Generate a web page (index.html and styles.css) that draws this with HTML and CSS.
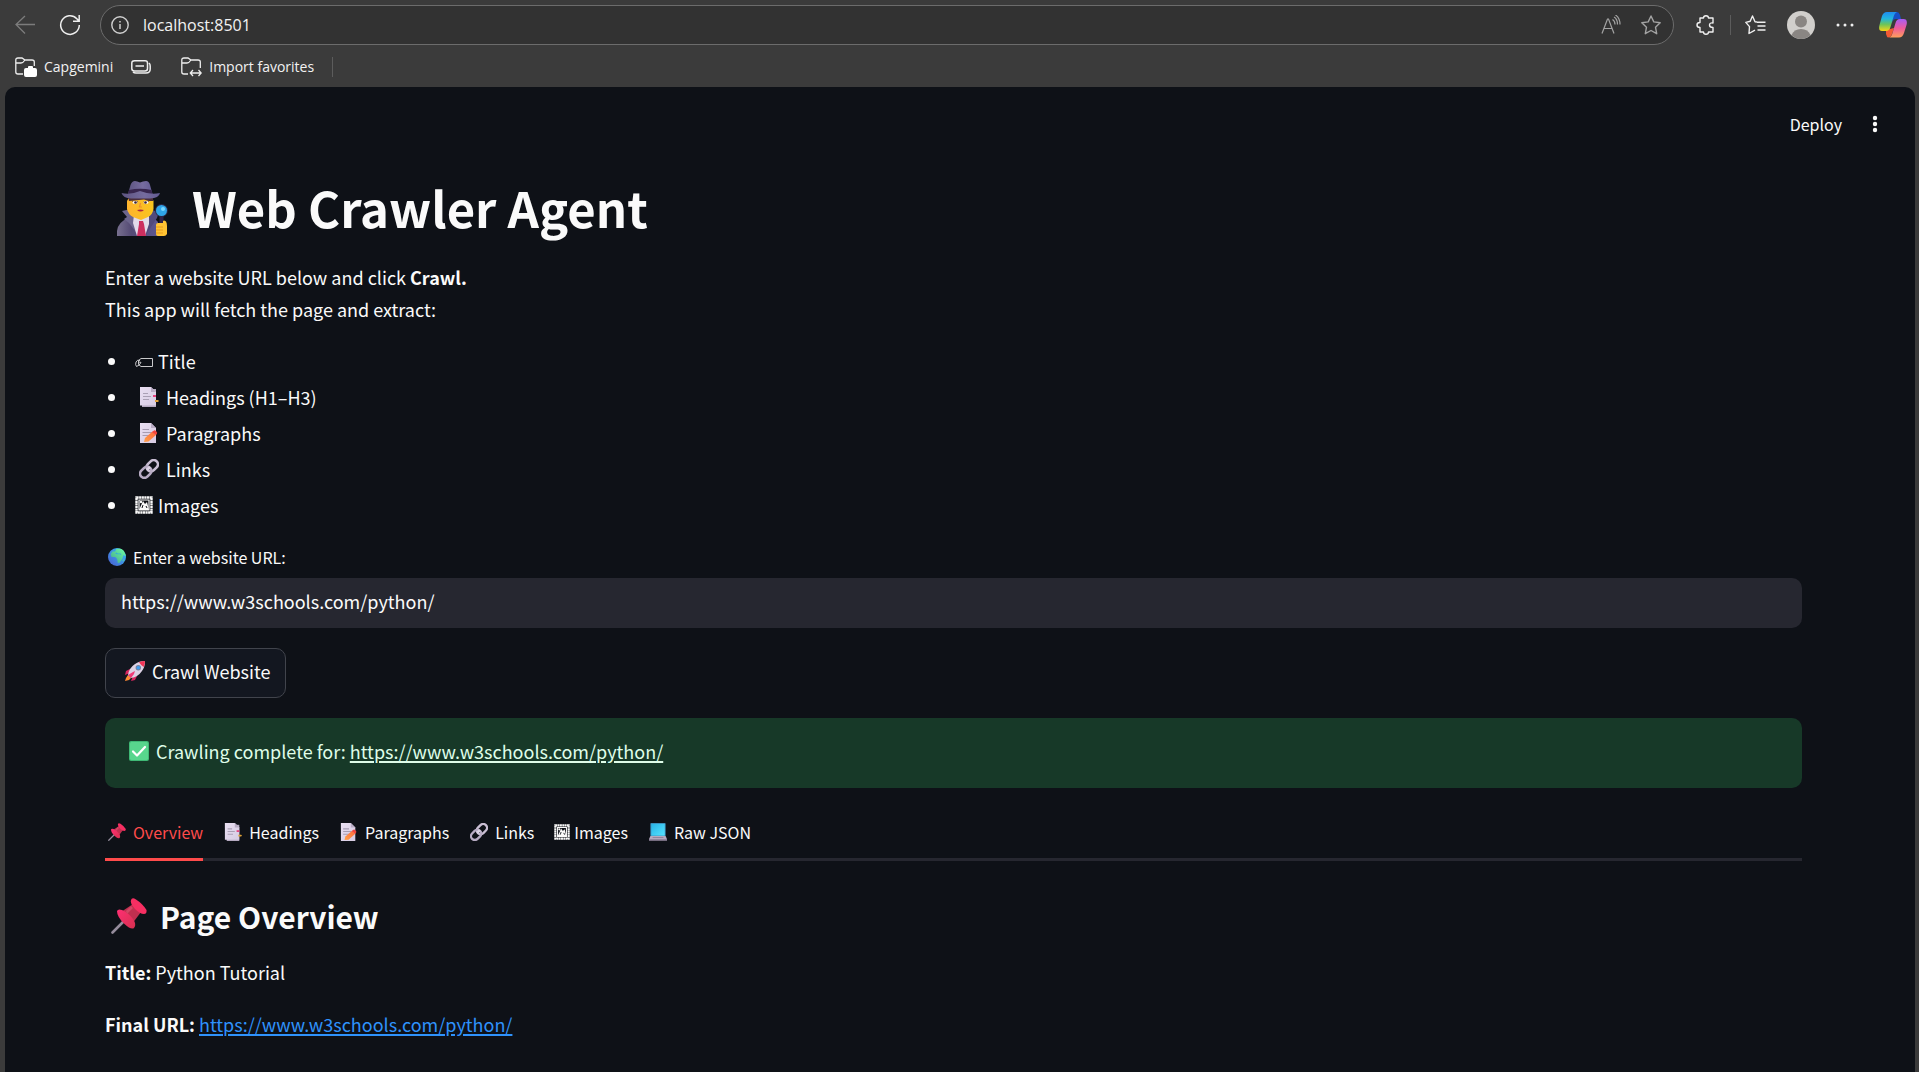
FILE: index.html
```html
<!DOCTYPE html>
<html lang="en">
<head>
<meta charset="utf-8">
<meta name="viewport" content="width=device-width, initial-scale=1">
<title>Web Crawler Agent</title>
<link rel="stylesheet" href="styles.css">
</head>
<body>
<svg class="sprite" width="0" height="0" aria-hidden="true">
  <defs>
    <linearGradient id="g-hat" x1="0" x2="1" y1="0" y2="0"><stop offset="0" stop-color="#5d5480"/><stop offset=".6" stop-color="#766c9f"/><stop offset="1" stop-color="#625a92"/></linearGradient>
    <linearGradient id="g-face" x1="0" x2="1" y1="0" y2="0"><stop offset="0" stop-color="#ffb42d"/><stop offset="1" stop-color="#f9c51e"/></linearGradient>
    <linearGradient id="g-coat" x1="0" x2="1" y1="0" y2="0"><stop offset="0" stop-color="#77708f"/><stop offset=".35" stop-color="#544a74"/><stop offset="1" stop-color="#5c5791"/></linearGradient>
    <linearGradient id="g-paper" x1="0" x2="1" y1="0" y2="1"><stop offset="0" stop-color="#e9dff2"/><stop offset="1" stop-color="#d6cbe2"/></linearGradient>
    <linearGradient id="g-pencil" x1="1" x2="0" y1="0" y2="1"><stop offset="0" stop-color="#ff6a3d"/><stop offset="1" stop-color="#ffa04a"/></linearGradient>
    <linearGradient id="g-sea" x1="1" x2="0" y1="0" y2="1"><stop offset="0" stop-color="#34c3f5"/><stop offset="1" stop-color="#4a5bd0"/></linearGradient>
    <linearGradient id="g-land" x1="1" x2="0" y1="0" y2="1"><stop offset="0" stop-color="#6effa5"/><stop offset="1" stop-color="#43a58b"/></linearGradient>
    <linearGradient id="g-pin" x1="0" x2="1" y1="0" y2="1"><stop offset="0" stop-color="#ff2f73"/><stop offset="1" stop-color="#d6304f"/></linearGradient>
    <linearGradient id="g-screen" x1="0" x2="1" y1="0" y2="1"><stop offset="0" stop-color="#28b3e6"/><stop offset="1" stop-color="#55e3ff"/></linearGradient>
    <linearGradient id="g-cop-a" x1="0" x2="0" y1="0" y2="1"><stop offset="0" stop-color="#1f8cf0"/><stop offset=".35" stop-color="#22b5dd"/><stop offset=".65" stop-color="#6bc45a"/><stop offset="1" stop-color="#f6d616"/></linearGradient>
    <linearGradient id="g-cop-b" x1="0" x2="0" y1="0" y2="1"><stop offset="0" stop-color="#a75cf5"/><stop offset=".5" stop-color="#ef5b9b"/><stop offset="1" stop-color="#ff9f5a"/></linearGradient>

    <symbol id="i-detective" viewBox="0 0 56 56">
      <path d="M2 55V50Q3 41 13 37L25 34L38 36L43 41V55Z" fill="url(#g-coat)"/>
      <path d="M7 30L16 28L24 45L24 55L14 42L9 38L12 36Z" fill="#6d668d"/>
      <path d="M37 29L44 31L42 37L38 43L30 55L31 42Z" fill="#514a7c"/>
      <path d="M19 34L34 34L34 43L30 55H22L18 42Z" fill="#e2dbea"/>
      <path d="M24 40H28L29 43L31 55H22L24 43Z" fill="#cc2f60"/>
      <path d="M12 20Q13 15 26 15Q38 15 38.500 20V28Q38 33 33 36L26 39L18 36Q13 33 12 28Z" fill="url(#g-face)"/>
      <path d="M13 15H38V20H34L29 18.500L14 20Z" fill="#4a2d3b"/>
      <path d="M17 20L23 21M34 20L28.500 21" stroke="#683a20" fill="none"/>
      <ellipse cx="20" cy="21.500" rx="2.500" ry="1.400" fill="#fff"/><ellipse cx="31" cy="21.500" rx="2.500" ry="1.400" fill="#fff"/>
      <circle cx="20.500" cy="21.500" r="1.300" fill="#3e2432"/><circle cx="30.500" cy="21.500" r="1.300" fill="#3e2432"/>
      <path d="M25.500 22L24.500 26H27" stroke="#ee8d2e" stroke-width="1.200" fill="none"/>
      <path d="M22 29Q25.500 28 29 29Q25.500 32 22 29Z" fill="#b0263f"/>
      <path d="M13 13L15.500 4Q17 0 20 0Q22 0 25 1.500Q28 0 31 0Q34 0 35 4L37.500 13Z" fill="url(#g-hat)"/>
      <path d="M14 9Q25 6.500 36.500 9L37.500 13H13Z" fill="#38264f"/>
      <path d="M6.500 12Q16 14 25 10Q35 14 45 12Q44 17 35 17.500H16Q8 17 6.500 12Z" fill="url(#g-hat)"/>
      <path d="M46.500 34V44" stroke="#302449" stroke-width="4"/>
      <circle cx="46.500" cy="29.500" r="6.500" fill="#2a2847"/><circle cx="46.500" cy="29.500" r="5.500" fill="#2fa5e8"/><circle cx="48" cy="28" r="2" fill="#78d7ff"/>
      <path d="M41 44Q41 42 43 42H48V40Q49 39 51 40.500Q52 42 52 45V53Q51 55 49 55H43Q41 55 41 53Z" fill="#ffc333"/>
      <path d="M41 46H48M41 49H48M41 52H48" stroke="#e89b1f"/>
    </symbol>
    <symbol id="i-tag" viewBox="0 0 18 18">
      <path d="M6 6.500H17.500V14.500H6L3.500 12.500V8.500ZM6 10.500Q4 14 1.500 14.500Q0 13 1 10Q2.500 7 5 8.500M3 11.500Q5 9 6 10.500" fill="none" stroke="#c9c9cb"/>
    </symbol>
    <symbol id="i-pages" viewBox="0 0 20 20">
      <path d="M3 2H17V20H3Z" fill="#b5a9c0"/>
      <path d="M1 0H12L17 5V18.500H1Z" fill="url(#g-paper)"/>
      <path d="M12 0L17 5H12Z" fill="#b9acc5"/>
      <path d="M4 6.500H9M4 9.500H12M4 12.500H10" stroke="#aaa0b5" stroke-width="1.200"/>
      <path d="M14 8H17V10H14Z" fill="#e5407d"/><path d="M16 13H19L20 14L19 15H16Z" fill="#dda037"/>
    </symbol>
    <symbol id="i-memo" viewBox="0 0 20 20">
      <path d="M1 0H12L17 5V20H1Z" fill="url(#g-paper)"/><path d="M12 0L17 5H12Z" fill="#b9acc5"/>
      <path d="M3.500 6.500H10M3.500 9.500H13M3.500 12.500H10" stroke="#a79cb2" stroke-width="1.200"/>
      <path d="M5 19L6 15L13.500 8.500L17 12L9.500 18.500Z" fill="url(#g-pencil)"/><path d="M13 9L15 7.500Q16 7 17 8L18 9.500Q18.500 10.500 17 12Z" fill="#f2453d"/>
    </symbol>
    <symbol id="i-chain" viewBox="0 0 20 20">
      <g fill="none" stroke-width="2.600"><rect x="7" y="2.500" width="12.500" height="8.500" rx="4.250" transform="rotate(-45 13.250 6.750)" stroke="#c9bed3"/><rect x=".5" y="9" width="12.500" height="8.500" rx="4.250" transform="rotate(-45 6.750 13.250)" stroke="#b7abc3"/><path d="M8 11L11 8" stroke="#dcd3e4"/></g>
    </symbol>
    <symbol id="i-frame" viewBox="0 0 18 18">
      <path d="M1.500 1.500H16.500V16.500H1.500Z" fill="none" stroke="#fafafa" stroke-width="2.400" stroke-dasharray="2.200 .4"/>
      <path d="M4 4H14V14H4Z" fill="none" stroke="#fafafa" stroke-width="1.200"/>
      <path d="M4 14L8 5L10 8L12 6L14 14Z" fill="#fafafa"/><circle cx="6" cy="6" r="1.200" fill="#fafafa"/><path d="M8 9L7 12M11 10L12 12" stroke="#0e1117"/>
    </symbol>
    <symbol id="i-globe" viewBox="0 0 20 20">
      <circle cx="10" cy="10" r="10" fill="url(#g-sea)"/>
      <path d="M9 1Q15-1 18 4L20 9L17 8L16 12L13 16L11 17L10 12L8 10L4 10L3 7L5 4L8 4Z" fill="url(#g-land)"/>
      <path d="M9 5L11 6L14 6L15 8L13 7L10 7L8 6Z" fill="#35aadb"/><path d="M16 14L18 12L17 15Z" fill="#54d59a"/>
    </symbol>
    <symbol id="i-rocket" viewBox="0 0 20 20">
      <path d="M5 8L1 10L0 14L5 12ZM12 15L10 19L6 20L8 15Z" fill="#d9265f"/>
      <path d="M3 14L1 17L0 20L4 19L6 17Z" fill="#ff8a32"/>
      <path d="M3 14Q4 7 10 3Q14 0 20 0Q20 6 17 10Q13 16 6 17Z" fill="#ddd2e5"/>
      <path d="M14 1.300Q17 0 20 0Q20 3 18.700 6Q16 4.500 14 1.300Z" fill="#f23557"/>
      <circle cx="13.300" cy="6.700" r="2.700" fill="#76819f"/><circle cx="13.300" cy="6.700" r="1.800" fill="#3d9cf0"/>
      <path d="M3 14L8 11L10 10L9 13L6 17Z" fill="#f23c78"/>
    </symbol>
    <symbol id="i-check" viewBox="0 0 20 20">
      <rect width="20" height="20" rx="2" fill="#3fb975"/><rect x="1" y="1" width="18" height="18" rx="1.500" fill="#58d68d"/><path d="M4 10.500L8 14.500L16 6" fill="none" stroke="#fff" stroke-width="2.200" stroke-linecap="round" stroke-linejoin="round"/>
    </symbol>
    <symbol id="i-pin" viewBox="0 0 36 36">
      <path d="M1.500 34.500L14 22" stroke="#958c9c" stroke-width="2.600" stroke-linecap="round"/>
      <path d="M10 14L22 6L30 14L21 26Z" fill="#c02f4f"/>
      <path d="M6 13Q7 10.500 11 12Q17 14.500 22 21Q26 27 23 30Q20 32 13.500 26Q6 19 6 13Z" fill="url(#g-pin)"/>
      <path d="M20 2Q21-1 25 1.500Q32 6 35.500 12Q36 16 33 16Q29 16 24 11Q19 6 20 2Z" fill="#f62f62"/>
      <path d="M15 13L20 8L22 10L16 16Z" fill="#d14765"/>
    </symbol>
    <symbol id="i-laptop" viewBox="0 0 20 20">
      <rect x="1.500" width="17" height="15" rx="1" fill="#3c8cb8"/><rect x="2.500" y="1" width="15" height="13" fill="url(#g-screen)"/><path d="M1.500 14.500H18.500L20 18V19.500H0V18Z" fill="#b6aabf"/><path d="M4 15.500H16V16.500H4ZM0 18H20V19.500H0Z" fill="#857a92"/>
    </symbol>
  </defs>
</svg>

<header class="browser">
  <div class="toolbar">
    <button class="tool tool-back" aria-label="Back"><svg width="20" height="20" viewBox="0 0 20 20"><path d="M20 9.500H1M10 1L1 9.500L10 18.500" fill="none" stroke="#7c7c7c" stroke-width="1.300"/></svg></button>
    <button class="tool tool-reload" aria-label="Refresh"><svg width="22" height="22" viewBox="0 0 22 22"><path d="M20.300 11A9.300 9.300 0 1 1 17.800 4.700L20 7M20.200 1V7.200H14" fill="none" stroke="#f0f0f0" stroke-width="1.500"/></svg></button>
    <div class="address">
      <svg width="18" height="18" viewBox="0 0 18 18" aria-hidden="true"><circle cx="9" cy="9" r="8.200" fill="none" stroke="#d0d0d0" stroke-width="1.400"/><path d="M9 8V13M9 5V6.600" stroke="#d0d0d0" stroke-width="1.500"/></svg>
      <input class="address-input" type="text" value="localhost:8501" aria-label="Address">
      <button class="tool" aria-label="Read aloud"><svg width="20" height="20" viewBox="0 0 20 20"><path d="M1 18.500L6.500 4H7.500L13 18.500M3 13.500H11M11.500 4.500Q14 6 14 9.500M13 2Q16.500 4 16.500 9.500M14.500 0Q19 3 19 9.500" fill="none" stroke="#a3a3a3" stroke-width="1.200"/></svg></button>
      <button class="tool" aria-label="Add to favorites"><svg width="20" height="20" viewBox="0 0 20 20"><path d="M10 1L12.800 6.900L19.200 7.700L14.500 12.200L15.700 18.700L10 15.500L4.300 18.700L5.500 12.200L.8 7.700L7.200 6.900Z" fill="none" stroke="#a3a3a3" stroke-width="1.400" stroke-linejoin="round"/></svg></button>
    </div>
    <div class="tools">
      <button class="tool" aria-label="Extensions"><svg width="20" height="20" viewBox="0 0 20 20"><path d="M4 3H7.500Q7.500 .7 10 .7T12.500 3H17V8Q13.500 7.500 13.500 10T17 12.500V17H12.500Q12.500 19.300 10 19.300T7.500 17H4V12.500Q1 12.500 1 10T4 7.500Z" fill="none" stroke="#f0f0f0" stroke-width="1.400" stroke-linejoin="round"/></svg></button>
      <span class="divider"></span>
      <button class="tool" aria-label="Favorites"><svg width="21" height="20" viewBox="0 0 21 20"><path d="M12 7L10 6.800L7.500 1L5.200 6.300L.8 7.400L4.500 11.600L4 18.500L10 15.200M12 7.200H20.500M12.500 11H20.500M12.500 15H20.500" fill="none" stroke="#f0f0f0" stroke-width="1.400" stroke-linejoin="round"/></svg></button>
      <button class="tool" aria-label="Profile"><svg width="28" height="28" viewBox="0 0 28 28"><circle cx="14" cy="14" r="14" fill="#d1cfcc"/><circle cx="14" cy="10.500" r="6" fill="#8a8683"/><path d="M4.500 24Q7 18 14 18T23.500 24Q19.500 28 14 28T4.500 24Z" fill="#8a8683"/></svg></button>
      <button class="tool" aria-label="Settings and more"><svg width="18" height="18" viewBox="0 0 18 18"><g fill="#f0f0f0"><circle cx="2" cy="9" r="1.500"/><circle cx="9" cy="9" r="1.500"/><circle cx="16" cy="9" r="1.500"/></g></svg></button>
      <button class="tool tool-copilot" aria-label="Copilot"><svg width="28" height="26" viewBox="0 0 28 26"><path d="M15 0H18Q20 0 21 3L22 7H17Q14 7 13 11Z" fill="#174fc5"/><path d="M7 18L15 16L13 22Q12 25.500 9 25.500Q8 25.500 7 22Z" fill="#f25a35"/><path d="M8 0H18Q15.500 1 14.500 5L11.500 15Q10.500 19 7 19H3Q-1 19 .5 13L3 4Q4.500 0 8 0Z" fill="url(#g-cop-a)"/><path d="M21 7H24.500Q29 7 27.500 13L25 21Q23.500 25.500 20 25.500H10Q12.500 25 13.500 21L16.500 11Q17.500 7 21 7Z" fill="url(#g-cop-b)"/></svg></button>
    </div>
  </div>
  <nav class="bookmarks" aria-label="Favorites bar">
    <a class="bookmark" href="#"><svg width="22" height="20" viewBox="0 0 22 20" aria-hidden="true"><path d="M8 17H3Q.8 17 .8 15V3Q.8 1 3 1H7L10 3H17Q19.300 3 19.300 5V9M.8 6H6Q8 6 10 3" fill="none" stroke="#eee" stroke-width="1.300"/><path d="M11 11H13V10Q13 9 14 9H17Q18 9 18 10V11H20Q22 11 22 13V18Q22 20 20 20H11Q9 20 9 18V13Q9 11 11 11Z" fill="#fff"/></svg>Capgemini</a>
    <button class="tool" aria-label="Collections"><svg width="20" height="14" viewBox="0 0 20 14"><path d="M3.500 .8H14Q16.500 .8 16.500 3V8.500Q16.500 11 14 11H3.500Q.8 11 .8 8.500V3Q.8 .8 3.500 .8ZM4.500 6H13M18 3Q19.200 4 19.200 6V9Q19.200 13 15 13H5Q3 13 2 12" fill="none" stroke="#eee" stroke-width="1.500"/></svg></button>
    <a class="bookmark bookmark-import" href="#"><svg width="21" height="20" viewBox="0 0 21 20" aria-hidden="true"><path d="M7 17H3Q.8 17 .8 15V3Q.8 1 3 1H7L10 3H17Q19.300 3 19.300 5V11M.8 6H6Q8 6 10 3M9.500 16H20M12 13L9.300 16L12 19M17.500 13L20.200 16L17.500 19" fill="none" stroke="#eee" stroke-width="1.300"/></svg>Import favorites</a>
    <span class="divider"></span>
  </nav>
</header>

<div class="app">
  <div class="app-bar">
    <button class="deploy">Deploy</button>
    <button class="tool" aria-label="Main menu"><svg width="6" height="18" viewBox="0 0 6 18"><g fill="#fafafa"><circle cx="3" cy="3" r="2.200"/><circle cx="3" cy="9" r="2.200"/><circle cx="3" cy="15" r="2.200"/></g></svg></button>
  </div>
  <main class="content">
    <h1 class="title"><svg class="emoji-title" aria-hidden="true"><use href="#i-detective"/></svg>Web Crawler Agent</h1>
    <p class="intro">Enter a website URL below and click <strong>Crawl.</strong><br>This app will fetch the page and extract:</p>
    <ul class="features">
      <li><svg class="glyph" aria-hidden="true"><use href="#i-tag"/></svg>Title</li>
      <li><svg class="emoji" aria-hidden="true"><use href="#i-pages"/></svg>Headings (H1–H3)</li>
      <li><svg class="emoji" aria-hidden="true"><use href="#i-memo"/></svg>Paragraphs</li>
      <li><svg class="emoji" aria-hidden="true"><use href="#i-chain"/></svg>Links</li>
      <li><svg class="glyph" aria-hidden="true"><use href="#i-frame"/></svg>Images</li>
    </ul>
    <label class="field-label" for="site-url"><svg class="emoji-small" aria-hidden="true"><use href="#i-globe"/></svg>Enter a website URL:</label>
    <input class="field" id="site-url" type="text" value="https://www.w3schools.com/python/">
    <button class="crawl"><svg class="emoji" aria-hidden="true"><use href="#i-rocket"/></svg>Crawl Website</button>
    <div class="alert" role="status"><svg class="emoji" aria-hidden="true"><use href="#i-check"/></svg><span>Crawling complete for: <a href="https://www.w3schools.com/python/">https://www.w3schools.com/python/</a></span></div>
    <div class="tabs" role="tablist">
      <button class="tab tab-active" role="tab" aria-selected="true"><svg class="emoji-small" aria-hidden="true"><use href="#i-pin"/></svg>Overview</button>
      <button class="tab" role="tab"><svg class="emoji-small" aria-hidden="true"><use href="#i-pages"/></svg>Headings</button>
      <button class="tab" role="tab"><svg class="emoji-small" aria-hidden="true"><use href="#i-memo"/></svg>Paragraphs</button>
      <button class="tab" role="tab"><svg class="emoji-small" aria-hidden="true"><use href="#i-chain"/></svg>Links</button>
      <button class="tab" role="tab"><svg class="glyph-small" aria-hidden="true"><use href="#i-frame"/></svg>Images</button>
      <button class="tab" role="tab"><svg class="emoji-small" aria-hidden="true"><use href="#i-laptop"/></svg>Raw JSON</button>
    </div>
    <section class="overview" role="tabpanel">
      <h2 class="subtitle"><svg class="emoji-subtitle" aria-hidden="true"><use href="#i-pin"/></svg>Page Overview</h2>
      <p><strong>Title:</strong> Python Tutorial</p>
      <p><strong>Final URL:</strong> <a class="link" href="https://www.w3schools.com/python/">https://www.w3schools.com/python/</a></p>
    </section>
  </main>
</div>
</body>
</html>
```
FILE: styles.css
```css
*, *::before, *::after { box-sizing: border-box; }

body {
  margin: 0;
  min-height: 100vh;
  display: flex;
  flex-direction: column;
  background: #3b3b3b;
  color: #fafafa;
  font-family: "Noto Sans CJK SC", "Noto Sans", sans-serif;
  font-size: 18px;
  line-height: 32px;
}

button, input { font: inherit; color: inherit; }
button { padding: 0; border: 0; background: none; cursor: pointer; }
svg { flex: none; display: block; }
h1, h2, p, ul { margin: 0; padding: 0; }
strong { font-weight: 700; }
.sprite { position: absolute; }

/* Browser frame */
.browser { font-family: "Open Sans", "Noto Sans", sans-serif; font-size: 14px; line-height: 20px; color: #f2f2f2; }
.toolbar { display: flex; align-items: center; height: 50px; padding: 0 12px 0 15px; }
.tool { display: flex; align-items: center; justify-content: center; }
.tool-reload { margin: 0 19px 0 24px; }
.address {
  flex: 1;
  display: flex;
  align-items: center;
  gap: 20px;
  height: 40px;
  padding: 0 12px 0 10px;
  border: 1px solid #6c6c6c;
  border-radius: 20px;
  background: #323232;
}
.address-input { flex: 1; min-width: 0; margin-left: -6px; padding: 0; border: 0; outline: 0; background: none; font-size: 16px; }
.tools { display: flex; align-items: center; gap: 21px; margin-left: 22px; }
.tool-copilot { margin-left: 4px; }
.divider { width: 1px; height: 20px; background: #5c5c5c; }
.tools .divider { margin: 0 -7px; }
.bookmarks { display: flex; align-items: center; gap: 18px; height: 37px; padding: 0 15px 4px; }
.bookmark { display: flex; align-items: center; gap: 7px; color: inherit; text-decoration: none; }
.bookmark-import { margin-left: 12px; }

/* Application */
.app { flex: 1; margin: 0 4px 0 5px; background: #0e1117; border-radius: 10px 10px 0 0; }
.app-bar { display: flex; align-items: center; justify-content: flex-end; gap: 30px; height: 76px; padding: 0 37px 2px 0; }
.deploy { font-size: 16px; }
.content { display: flex; flex-direction: column; padding: 14px 113px 24px 100px; }

.title { display: flex; align-items: flex-start; height: 66px; font-size: 49px; font-weight: 700; line-height: 60px; }
.emoji-title { width: 56px; height: 56px; margin: 4px 21px 0 10px; }
.emoji { width: 20px; height: 20px; margin: 0 7px 0 4px; }
.emoji-small { width: 18px; height: 18px; margin: 0 7px 0 3px; }
.emoji-subtitle { width: 36px; height: 36px; margin: 0 13px 0 6px; }
.glyph { width: 18px; height: 18px; margin-right: 5px; }
.glyph-small { width: 16px; height: 16px; margin: 0 4px 0 2px; }

.intro { margin-top: 18px; }
.features { margin: 18px 0 20px; list-style: none; }
.features li { display: flex; align-items: center; height: 36px; }
.features li::before { content: ""; width: 7px; height: 7px; margin: 0 20px 0 3px; border-radius: 50%; background: #fafafa; }

.field-label { display: flex; align-items: center; font-size: 16px; line-height: 28px; }
.field { width: 100%; height: 50px; margin-top: 7px; padding: 0 16px 4px; border: 0; border-radius: 10px; outline: 0; background: #262730; }
.crawl { display: flex; align-items: center; align-self: flex-start; height: 50px; margin-top: 20px; padding: 0 15px 4px; border: 1px solid #41444c; border-radius: 10px; background: #131720; }
.alert { display: flex; align-items: center; height: 70px; margin-top: 20px; padding: 0 20px 4px; border-radius: 10px; background: #173928; color: #dffde9; }
.alert a, .link { text-decoration-thickness: 2px; text-underline-offset: 2px; }
.alert a { color: inherit; }

.tabs { display: flex; gap: 18px; margin-top: 20px; border-bottom: 3px solid #262730; }
.tab { display: flex; align-items: center; height: 53px; margin-bottom: -3px; padding-bottom: 2px; border-bottom: 3px solid transparent; font-size: 16px; }
.tab-active { border-bottom-color: #ff4b4b; color: #ff4b4b; }

.overview { display: flex; flex-direction: column; gap: 20px; padding-top: 35px; }
.subtitle { display: flex; align-items: center; font-size: 30px; font-weight: 700; line-height: 40px; }
.link { color: #2f92fb; }
```
